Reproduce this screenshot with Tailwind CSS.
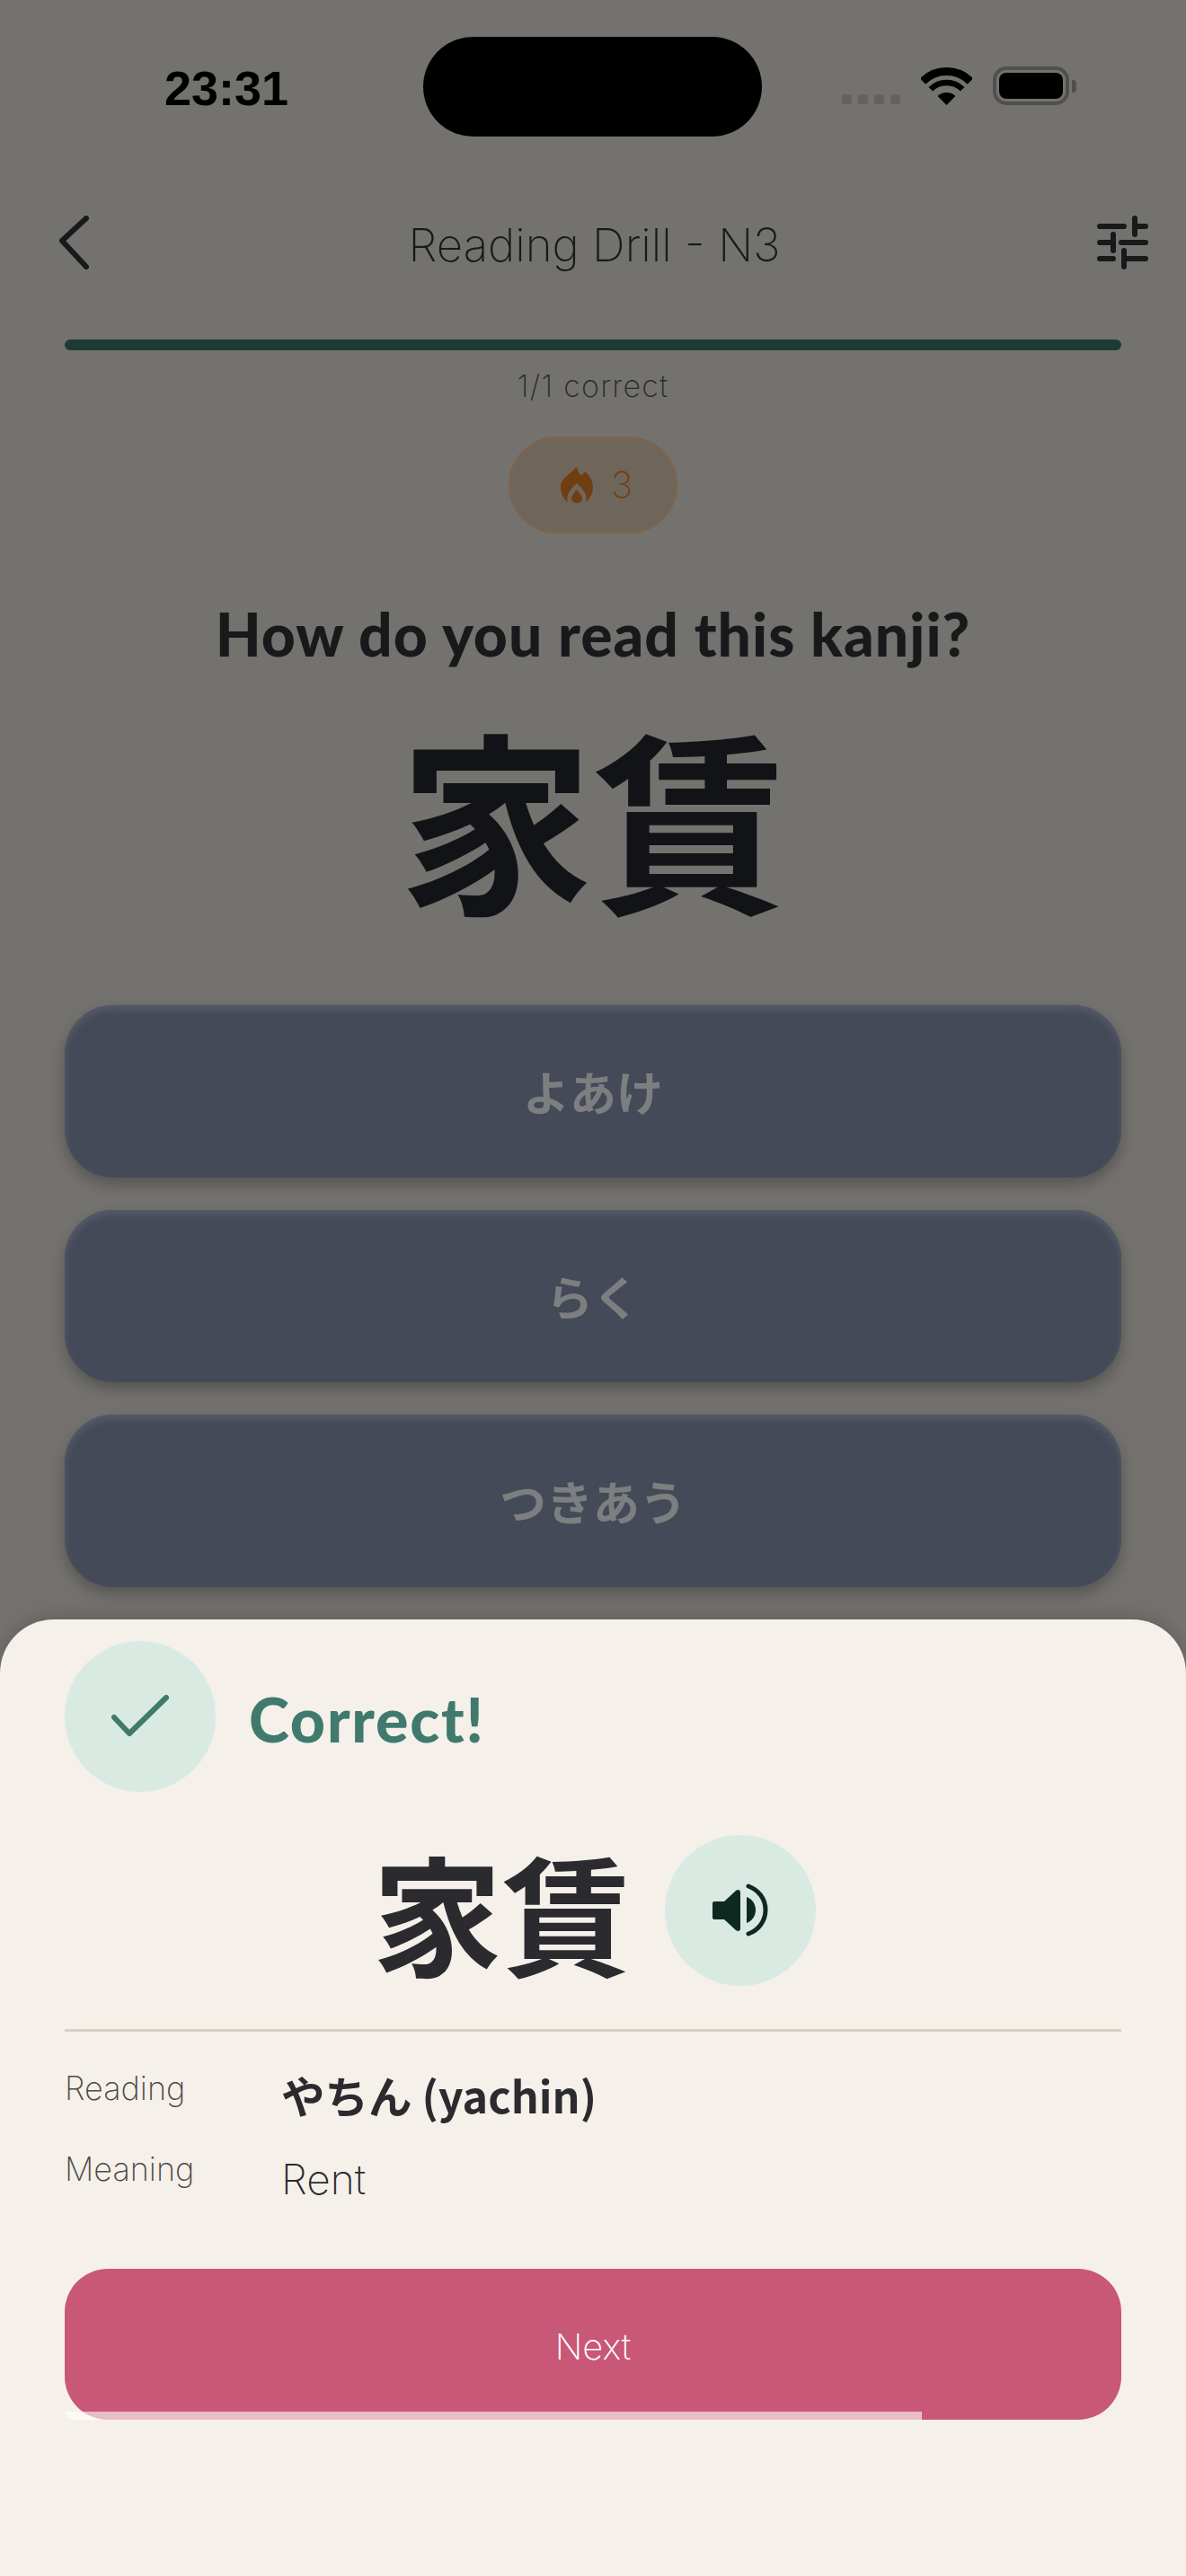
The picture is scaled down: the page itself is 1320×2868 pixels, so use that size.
<!DOCTYPE html>
<html lang="ja">
<head>
  <meta charset="utf-8" />
  <title>Reading Drill - N3</title>
  <script src="https://cdn.jsdelivr.net/npm/@tailwindcss/browser@4"></script>
</head>
<body class="bg-[#73726e]">
  <div class="relative w-[1320px] h-[2868px] overflow-hidden bg-[#73726e] font-['Inter','Noto_Sans_CJK_JP',sans-serif]">

    <!-- status bar -->
    <div class="flex h-[152px] pt-[41px]">
      <div class="w-[471px] pl-[183px] pt-[28px] text-[54px] leading-[58px] font-semibold text-black font-['Liberation_Sans','Inter',sans-serif]">23:31</div>
      <div class="w-[377px] h-[111px] rounded-[56px] bg-black"></div>
      <div class="flex items-end h-[76px] ml-[89px]">
        <div class="flex gap-[7px] mb-[1px]">
          <div class="w-[11px] h-[11px] rounded-[3px] bg-[#636260]"></div>
          <div class="w-[11px] h-[11px] rounded-[3px] bg-[#636260]"></div>
          <div class="w-[11px] h-[11px] rounded-[3px] bg-[#636260]"></div>
          <div class="w-[11px] h-[11px] rounded-[3px] bg-[#636260]"></div>
        </div>
        <svg class="ml-[23px]" width="57" height="42" viewBox="0 0 57 42">
          <path d="M2 15.5A37.5 37.5 0 0 1 55 15.5" fill="none" stroke="#000" stroke-width="9"/>
          <path d="M10.8 24.3A25 25 0 0 1 46.2 24.3" fill="none" stroke="#000" stroke-width="6.5"/>
          <path d="M28.5 42L18.6 32.1A14 14 0 0 1 38.4 32.1Z" fill="#000"/>
        </svg>
        <div class="ml-[23px] flex items-center">
          <div class="w-[85px] h-[43px] rounded-[15px] border-[4px] border-[#504f4d] p-[3px]">
            <div class="w-full h-full rounded-[8px] bg-black"></div>
          </div>
          <div class="ml-[3px] w-[5px] h-[14px] rounded-r-[4px] bg-[#504f4d]"></div>
        </div>
      </div>
    </div>

    <!-- header -->
    <div class="flex items-center justify-between h-[110px] mt-[63px] pl-[64px] pr-[42px]">
      <svg width="38" height="60" viewBox="0 0 38 60"><path d="M32 3L5 28L32 57" fill="none" stroke="#18191b" stroke-width="6" stroke-linecap="round" stroke-linejoin="round"/></svg>
      <div class="pt-[6px] text-[51px] leading-[60px] font-extralight text-[#18191b]">Reading Drill - N3</div>
      <svg width="57" height="60" viewBox="0 0 57 60" fill="none" stroke="#18191b" stroke-width="6" stroke-linecap="round">
        <path d="M3 12H30M42 3V21M42 12H54M3 30H18M18 21V39M27 30H54M3 48H18M30 39V57M30 48H54"/>
      </svg>
    </div>

    <!-- progress -->
    <div class="mx-[72px] mt-[53px] h-[12px] rounded-full bg-[#1d3a35]"></div>
    <div class="mt-[20px] text-center text-[34px] leading-[40px] font-extralight text-[#2b2b2c] tracking-[1.2px]">1/1 correct</div>

    <!-- streak pill -->
    <div class="flex justify-center mt-[36px]">
      <div class="flex items-center justify-center gap-[20px] w-[188px] h-[108px] pl-[8px] rounded-full border-[3px] border-[#7a6450] bg-[#6f665b]">
        <svg width="36" height="40" viewBox="0 0 36 40">
          <path fill-rule="evenodd" fill="#6f3f12" d="M17 0C20 2 19 7 23 9C25 9 25 6 27 5C32 9 36 15 36 22C36 29 33 35 28 39C30 33 28 27 18 18C8 27 6 33 8 39C3 35 0 29 0 22C0 12 11 9 17 0ZM18 25C21 29 24 32 24 35C24 38 21 40 18 40C15 40 12 38 12 35C12 32 15 29 18 25Z"/>
        </svg>
        <span class="text-[40px] leading-[48px] font-extralight text-[#6f3f12]">3</span>
      </div>
    </div>

    <!-- question -->
    <div class="mt-[74px] text-center text-[66px] leading-[76px] font-black text-[#18191b] tracking-[1px] font-['Lato','Inter',sans-serif]">How do you read this kanji?</div>
    <div class="mt-[33px] text-center text-[216px] leading-[260px] font-bold text-[#121316] font-['Noto_Sans_CJK_JP',sans-serif]">家賃</div>

    <!-- answers -->
    <div class="flex flex-col gap-[36px] mx-[72px] mt-[82px]">
      <div class="flex items-center justify-center h-[192px] rounded-[54px] bg-[#444a57] shadow-[inset_0_5px_8px_#565c69,0_8px_16px_rgba(0,0,0,0.25)] text-[52px] font-bold text-[#7d7e80] font-['Noto_Sans_CJK_JP',sans-serif]">よあけ</div>
      <div class="flex items-center justify-center h-[192px] rounded-[54px] bg-[#444a57] shadow-[inset_0_5px_8px_#565c69,0_8px_16px_rgba(0,0,0,0.25)] text-[52px] font-bold text-[#7d7e80] font-['Noto_Sans_CJK_JP',sans-serif]">らく</div>
      <div class="flex items-center justify-center h-[192px] rounded-[54px] bg-[#444a57] shadow-[inset_0_5px_8px_#565c69,0_8px_16px_rgba(0,0,0,0.25)] text-[52px] font-bold text-[#7d7e80] font-['Noto_Sans_CJK_JP',sans-serif]">つきあう</div>
    </div>

    <!-- result sheet -->
    <div class="absolute inset-x-0 bottom-0 h-[1065px] rounded-t-[60px] bg-[#f5f0ea] shadow-[0_-4px_20px_rgba(0,0,0,0.15)] px-[72px] pt-[24px]">
      <div class="flex items-center gap-[37px]">
        <div class="flex items-center justify-center w-[168px] h-[168px] rounded-full bg-[#d9eae3]">
          <svg width="64" height="48" viewBox="0 0 64 48"><path d="M3 25L20 43L61 3" fill="none" stroke="#3f7a6d" stroke-width="6" stroke-linecap="round" stroke-linejoin="round"/></svg>
        </div>
        <div class="pt-[6px] text-[68px] leading-[80px] font-black tracking-[1.8px] text-[#3f7a6d] font-['Lato','Inter',sans-serif]">Correct!</div>
      </div>

      <div class="flex items-center justify-center gap-[37px] mt-[48px] pl-[2px]">
        <div class="text-[144px] leading-[168px] font-bold text-[#2b2a2e] font-['Noto_Sans_CJK_JP',sans-serif]">家賃</div>
        <div class="flex items-center justify-center w-[168px] h-[168px] rounded-full bg-[#d9eae3]">
          <svg width="64" height="60" viewBox="0 0 64 60">
            <path fill="#0e2a20" d="M3 20C1.500 20 1 21 1 22.500V37.500C1 39 1.500 40 3 40H14L27 52C29.500 54 32 53 32 50V10C32 7 29.500 6 27 8L14 20Z"/>
            <path fill="#0e2a20" d="M39 15C45 17 49 23 49 29.500C49 36 45 42 39 44Z"/>
            <path fill="none" stroke="#0e2a20" stroke-width="5" stroke-linecap="round" d="M41 3C52 7 60 17 60 29.500C60 42 52 52 41 56"/>
          </svg>
        </div>
      </div>

      <div class="h-[3px] mt-[48px] bg-[#d9d0c3]"></div>

      <div class="grid grid-cols-[241px_1fr] mt-[41px] font-extralight">
        <div class="text-[36px] leading-[44px] text-[#4f4a43]">Reading</div>
        <div class="text-[48.5px] leading-[58px] font-bold text-[#2b2a2e] font-['Noto_Sans_CJK_JP',sans-serif]">やちん (yachin)</div>
        <div class="mt-[32px] text-[36px] leading-[44px] text-[#4f4a43]">Meaning</div>
        <div class="mt-[37px] text-[46px] leading-[56px] text-[#2b2a2e]">Rent</div>
      </div>

      <div class="relative mt-[72px] flex items-center justify-center h-[168px] pt-[6px] rounded-[48px] bg-[#c85778] text-[40px] font-extralight text-white">
        Next
        <div class="absolute left-0 bottom-0 h-[9px] w-[954px] rounded-bl-[10px] bg-white/60"></div>
      </div>
    </div>
  </div>
</body>
</html>
